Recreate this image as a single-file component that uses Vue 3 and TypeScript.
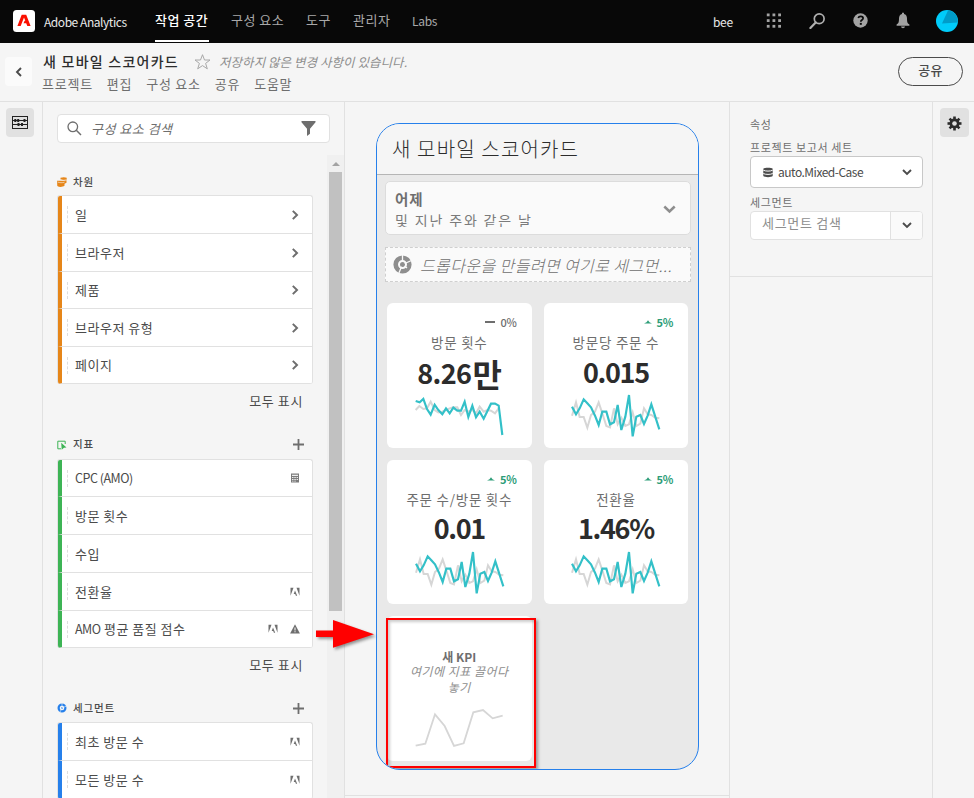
<script setup lang="ts">
type Badge = 'chevron' | 'calc' | 'adobe' | 'warn'
interface Item { name: string; badges: Badge[] }
interface Group { key: string; title: string; add: boolean; more: boolean; items: Item[] }
interface Kpi { label: string; value: string; unit?: string; delta: string; up: boolean; now: string; before: string }

const nav = [
  { label: '작업 공간', cls: 'n1' },
  { label: '구성 요소', cls: 'n2' },
  { label: '도구', cls: 'n3' },
  { label: '관리자', cls: 'n4' },
  { label: 'Labs', cls: 'n5' },
]
const menus = ['프로젝트', '편집', '구성 요소', '공유', '도움말']

const groups: Group[] = [
  {
    key: 'dim', title: '차원', add: false, more: true,
    items: ['일', '브라우저', '제품', '브라우저 유형', '페이지'].map((name) => ({ name, badges: ['chevron'] as Badge[] })),
  },
  {
    key: 'met', title: '지표', add: true, more: true,
    items: [
      { name: 'CPC (AMO)', badges: ['calc'] },
      { name: '방문 횟수', badges: [] },
      { name: '수입', badges: [] },
      { name: '전환율', badges: ['adobe'] },
      { name: 'AMO 평균 품질 점수', badges: ['adobe', 'warn'] },
    ],
  },
  {
    key: 'seg', title: '세그먼트', add: true, more: false,
    items: [
      { name: '최초 방문 수', badges: ['adobe'] },
      { name: '모든 방문 수', badges: ['adobe'] },
    ],
  },
]

// Latin runs are set tighter than Hangul runs.
const runs = (text: string) =>
  (text.match(/[A-Z()]+(?: \([A-Z]+\))?|[^A-Z()]+/g) ?? []).map((t) => ({ t, latin: /[A-Z]/.test(t) }))

const waveNow = '87,56 99,79 110,61 122,34 133,46 144,58 156,83 167,111 178,71 190,71 201,109 213,103 224,51 235,126 247,86 258,21 269,145 280,86 292,81 303,108 314,83 325,49 349,124'
const waveBefore = '87,83 99,43 110,87 122,87 133,119 144,81 156,71 167,43 178,76 190,114 201,118 213,61 224,109 235,89 247,114 258,109 269,73 280,114 292,107 303,61 314,79 325,81 336,89 349,91'

const kpis: Kpi[] = [
  {
    label: '방문 횟수', value: '8.26', unit: '만', delta: '0%', up: false,
    now: '86,39 98,43 109,33 120,63 131,80 143,50 154,66 166,79 177,61 188,76 199,59 211,68 222,68 233,41 244,87 256,53 267,88 278,71 290,92 312,47 324,47 335,53 346,141',
    before: '86,66 97,54 109,63 120,61 131,41 143,66 154,73 166,71 177,66 188,61 199,58 211,58 222,81 233,66 244,71 256,66 267,76 278,56 290,71 301,66 312,68 324,76 335,61',
  },
  { label: '방문당 주문 수', value: '0.015', delta: '5%', up: true, now: waveNow, before: waveBefore },
  { label: '주문 수/방문 횟수', value: '0.01', delta: '5%', up: true, now: waveNow, before: waveBefore },
  { label: '전환율', value: '1.46%', delta: '5%', up: true, now: waveNow, before: waveBefore },
]
</script>

<template>
  <div class="app">
    <header class="topbar">
      <svg class="logo" viewBox="0 0 22 22"><rect width="22" height="22" rx="3.5" fill="#fff" /><path d="M8.700 4.700h4.500l4.400 11.300h-3.300l-1.100-2.700h-2.700l1.100-2.500h.7l-1.300-3.200-3.300 8.400H4.400z" fill="#fa0f00" /></svg>
      <span class="product">Adobe Analytics</span>
      <nav class="nav">
        <a v-for="(n, i) in nav" :key="n.label" :class="[n.cls, { on: i === 0 }]">{{ n.label }}</a>
      </nav>
      <div class="tools">
        <span class="user">bee</span>
        <svg class="t-grid" width="16" height="16" viewBox="0 0 16 16" fill="#a3a3a3"><template v-for="r in 3" :key="r"><rect v-for="c in 3" :key="c" :x="(c - 1) * 5.7 + 1.8" :y="(r - 1) * 5.7 + 0.5" width="2.8" height="2.8" /></template></svg>
        <svg class="t-search" width="16" height="16" viewBox="0 0 16 16" fill="none" stroke="#b0b0b0"><circle cx="10.200" cy="5.800" r="4.900" stroke-width="1.700" /><path d="M6.700 9.400 1.400 15" stroke-width="2.200" stroke-linecap="round" /></svg>
        <svg class="t-help" width="15" height="15" viewBox="0 0 15 15"><circle cx="7.500" cy="7.500" r="7.200" fill="#a3a3a3" /><path d="M5.200 5.100c.4-1.200 1.300-1.700 2.500-1.700 1.400 0 2.400.7 2.400 1.900 0 1.800-2.300 1.700-2.300 3.400" fill="none" stroke="#080808" stroke-width="1.700" /><rect x="6.800" y="9.900" width="2" height="1.900" fill="#080808" /></svg>
        <svg class="t-bell" width="14" height="17" viewBox="0 0 14 17" fill="#a3a3a3"><path d="M6 .8h2v1.200c2 .5 3 2.200 3 4.500 0 4 .7 5 2.400 6v1.200H.6v-1.200C2.300 11.500 3 10.500 3 6.500 3 4.200 4 2.500 6 2zM5 14.600h4c-.2 1-1 1.700-2 1.700s-1.800-.7-2-1.700z" /></svg>
        <svg class="t-avatar" width="22" height="22" viewBox="0 0 22 22"><circle cx="11" cy="11" r="11" fill="#00ccfa" /><path d="M12 .6C18 1 22 6 21.800 12.400L6 13.600z" fill="#009cc9" /></svg>
      </div>
    </header>

    <div class="project">
      <button class="back"><svg width="8" height="10" viewBox="0 0 8 10" fill="none" stroke="#4b4b4b" stroke-width="1.900"><path d="M6 1 2 5l4 4" /></svg></button>
      <div class="titles">
        <div class="line1">
          <h1>새 모바일 스코어카드</h1>
          <svg class="star" width="17" height="16" viewBox="0 0 17 16"><path d="m8.500.700 2 5.300h5.500l-4.400 3.400 1.700 5.400-4.800-3.200-4.800 3.200 1.700-5.400L1 6h5.500z" fill="none" stroke="#a8a8a8" /></svg>
          <em>저장하지 않은 변경 사항이 있습니다.</em>
        </div>
        <div class="line2"><span v-for="m in menus" :key="m">{{ m }}</span></div>
      </div>
      <button class="share">공유</button>
    </div>

    <main class="body">
      <aside class="rail">
        <button class="railbtn"><svg width="16" height="13" viewBox="0 0 16 13"><path d="M.5 0v13M15.500 0v13M0 .500h16M0 12.500h16M0 4.500h16M0 8.500h16" fill="none" stroke="#222" stroke-width="1" /><path d="M2.300 3h2v3h-2zM5.200 3h2v3h-2zM11.500 3h2v3h-2zM5.500 7h2v3h-2zM9 7h2v3H9z" fill="#222" /></svg></button>
      </aside>

      <section class="left">
        <div class="search">
          <svg width="15" height="15" viewBox="0 0 15 15" fill="none" stroke="#6e6e6e"><circle cx="5.800" cy="5.800" r="4.800" stroke-width="1.300" /><path d="m9.300 9.300 4.700 4.700" stroke-width="1.500" /></svg>
          <em>구성 요소 검색</em>
          <svg width="15" height="15" viewBox="0 0 15 15" fill="#6e6e6e"><path d="M.5 0h14v1.200L9 7.800v5l-3 2.200V7.800L.5 1.200z" /></svg>
        </div>
        <div class="scroller">
          <div class="groups">
            <div v-for="g in groups" :key="g.key" class="group" :class="g.key">
              <div class="ghead">
                <svg v-if="g.key === 'dim'" width="10" height="10" viewBox="0 0 10 10"><path d="M3.500.800C5.500 0 8 0 9.700.700v2L8.500 3.500 3.500 2.500z" fill="#e68619" /><path d="M0 3.800h7.500l2-.6v2.600l-2 1v2C5.500 10.300 2 10.300.300 9z" fill="#e68619" /><path d="M3.500 2.700c2 .7 4 .7 6 0M.5 5c2 .9 5 .9 7 .2" stroke="#f5f5f5" stroke-width=".6" fill="none" /></svg>
                <svg v-else-if="g.key === 'met'" width="10" height="10" viewBox="0 0 10 10"><path d="M4 8.800H.8V1.200h7.400V4" fill="none" stroke="#3db455" /><path d="M4.200 2.800 9.500 7.500 7 7.700 4.700 9.800z" fill="#3db455" /></svg>
                <svg v-else width="10" height="10" viewBox="0 0 10 10"><circle cx="5" cy="5" r="3.400" fill="none" stroke="#2680eb" stroke-width="2.200" /><circle cx="5" cy="5" r="1" fill="#2680eb" /><path d="M5 5V0M5 5l4.500-2M5 5 2.500 10" stroke="#f5f5f5" stroke-width=".6" /></svg>
                <b>{{ g.title }}</b>
                <svg v-if="g.add" class="plus" width="11" height="11" viewBox="0 0 11 11"><path d="M5.500 0v11M0 5.500h11" stroke="#6e6e6e" stroke-width="1.800" /></svg>
              </div>
              <ul>
                <li v-for="it in g.items" :key="it.name">
                  <i class="grip"></i>
                  <span class="name"><span v-for="r in runs(it.name)" :key="r.t" :class="{ latin: r.latin }">{{ r.t }}</span></span>
                  <template v-for="b in it.badges" :key="b">
                    <svg v-if="b === 'chevron'" width="10" height="10" viewBox="0 0 10 10"><path d="m2.800.900 4.200 4.100-4.200 4.100" fill="none" stroke="#6e6e6e" stroke-width="2" /></svg>
                    <svg v-else-if="b === 'calc'" width="10" height="10" viewBox="0 0 10 10"><path d="M1 .500h8v9H1z" fill="#7c7c7c" /><path d="M2 1.700h6v1.300H2zM2 4h1.500v1H2zM4.300 4h1.500v1H4.300zM6.600 4H8v1H6.600zM2 6h1.500v1H2zM4.300 6h1.500v1H4.300zM6.600 6H8v1H6.600zM2 7.800h1.500v.8H2zM4.300 7.800h1.500v.8H4.300z" fill="#eee" /></svg>
                    <svg v-else-if="b === 'adobe'" width="10" height="10" viewBox="0 0 10 10"><path d="M.5.800h3L.5 8.800zM9.500.800h-3l3 8zM5 3.600l2.200 5.200H5.900L5.200 7H3.700z" fill="#6e6e6e" /></svg>
                    <svg v-else width="10" height="10" viewBox="0 0 10 10"><path d="M5 .300 9.900 9.500H.1z" fill="#6e6e6e" /><path d="M5 3.500v3M5 7.200v1.100" stroke="#fff" /></svg>
                  </template>
                </li>
              </ul>
              <a v-if="g.more" class="more">모두 표시</a>
            </div>
          </div>
          <div class="bar"><i class="scroll-up"></i><i class="thumb"></i></div>
        </div>
      </section>

      <section class="center">
        <div class="phone">
          <h2>새 모바일 스코어카드</h2>
          <div class="screen">
            <div class="range">
              <div><b>어제</b><p>및 지난 주와 같은 날</p></div>
              <svg width="13" height="9" viewBox="0 0 13 9"><path d="m1.300 1.500 5.200 5 5.200-5" fill="none" stroke="#8e8e8e" stroke-width="2.500" /></svg>
            </div>
            <div class="drop">
              <svg width="19" height="19" viewBox="0 0 19 19"><circle cx="9.500" cy="9.500" r="6.800" fill="none" stroke="#8e8e8e" stroke-width="4.600" /><circle cx="9.500" cy="9.500" r="2.500" fill="#8e8e8e" /><path d="M9.500 7V0M11.700 8.500 18.500 5.500M8.500 11.700 5.500 19M11.500 11l2.500 2" stroke="#fafafa" stroke-width="1.300" /></svg>
              <em>드롭다운을 만들려면 여기로 세그먼...</em>
            </div>
            <div class="grid">
              <article v-for="k in kpis" :key="k.label" class="kpi">
                <div class="delta" :class="{ rise: k.up }">
                  <svg v-if="k.up" width="8" height="4" viewBox="0 0 8 4"><path d="M0 3.500Q3 2.500 4 .200 5 2.500 8 3.500z" fill="#2d9d78" /></svg>
                  <svg v-else width="10" height="2" viewBox="0 0 10 2"><path d="M0 1h10" stroke="#6e6e6e" stroke-width="2" /></svg>
                  <span>{{ k.delta }}</span>
                </div>
                <div class="label">{{ k.label }}</div>
                <div class="value" :class="{ tight: !k.unit }">{{ k.value }}<span v-if="k.unit">{{ k.unit }}</span></div>
                <svg class="spark" viewBox="0 0 435 165" fill="none"><polyline :points="k.before" stroke="#d6d6d6" stroke-width="6" /><polyline :points="k.now" stroke="#33c0c8" stroke-width="6.500" /></svg>
              </article>
              <article class="kpi fresh">
                <b>새 KPI</b>
                <em>여기에 지표 끌어다<br />놓기</em>
                <svg class="spark" viewBox="0 0 435 165" fill="none"><polyline points="86,134 115,128 144,40 173,75 201,135 230,127 259,34 288,27 317,52 347,44" stroke="#d6d6d6" stroke-width="5.500" /></svg>
                <div class="mark"></div>
              </article>
            </div>
          </div>
        </div>
        <div class="foot"></div>
      </section>

      <section class="props">
        <div class="panel">
          <h3>속성</h3>
          <label>프로젝트 보고서 세트</label>
          <div class="select">
            <svg width="10" height="11" viewBox="0 0 10 11"><path d="M.3 1.700C1.500.3 8.500.3 9.700 1.700v7.300c-1.200 1.500-8.200 1.500-9.400 0z" fill="#4b4b4b" /><path d="M.3 3.200c2 1.200 7.400 1.200 9.400 0M.3 6.500c2 1.200 7.400 1.200 9.400 0" fill="none" stroke="#fff" /></svg>
            <span>auto.Mixed-Case</span>
            <svg width="10" height="7" viewBox="0 0 10 7"><path d="m1 1 4 4 4-4" fill="none" stroke="#4b4b4b" stroke-width="1.900" /></svg>
          </div>
          <label class="l2">세그먼트</label>
          <div class="combo">
            <span>세그먼트 검색</span>
            <button><svg width="10" height="7" viewBox="0 0 10 7"><path d="m1 1 4 4 4-4" fill="none" stroke="#4b4b4b" stroke-width="1.900" /></svg></button>
          </div>
        </div>
      </section>

      <aside class="rail right">
        <button class="railbtn"><svg width="15" height="15" viewBox="-7.500 -7.500 15 15"><g fill="#2c2c2c"><rect v-for="a in 4" :key="a" x="-1.300" y="-7" width="2.600" height="14" :transform="`rotate(${a * 45})`" /></g><circle r="3.700" fill="none" stroke="#2c2c2c" stroke-width="2.600" /><circle r="2.300" fill="#e1e1e1" /></svg></button>
      </aside>
    </main>

    <svg class="arrow" width="64" height="36" viewBox="0 0 64 36"><path d="M1 12.500h17V2l41 14.300L18 29.700V19H1z" fill="#f00" /></svg>
  </div>
</template>

<style>
body { margin: 0; overflow: hidden; }
</style>

<style scoped>
* { box-sizing: border-box; margin: 0; padding: 0; }
.app { width: 974px; height: 798px; overflow: hidden; position: relative; display: flex; flex-direction: column; background: #f5f5f5; color: #4b4b4b; font-family: "Noto Sans CJK KR", "Noto Sans", sans-serif; font-size: 13px; line-height: 16px; white-space: nowrap; }
svg { display: block; flex: none; }
button { font: inherit; color: inherit; border: 0; background: none; }

.topbar { height: 43px; flex: none; display: flex; align-items: center; background: #080808; padding-left: 13px; padding-right: 16px; }
.logo { width: 22px; height: 22px; margin-bottom: 2px; }
.product { margin-left: 9px; width: 111px; color: #e8e8e8; font-size: 12px; letter-spacing: -.45px; }
.nav { display: flex; align-self: stretch; }
.nav a { color: #a8a8a8; padding-top: 12px; letter-spacing: .5px; }
.nav a.on { color: #fff; border-bottom: 2px solid #fff; margin-bottom: 1px; font-weight: 500; }
.n1 { width: 54px; margin-right: 22px; }
.n2 { width: 75px; }
.n3 { width: 47px; }
.n4 { width: 59px; }
.nav .n5 { font-size: 12px; letter-spacing: -.3px; padding-top: 13px; }
.tools { margin-left: auto; display: flex; align-items: center; height: 100%; }
.tools svg { margin-bottom: 2px; }
.user { color: #e8e8e8; font-size: 12px; letter-spacing: -.3px; width: 52px; }
.t-search { margin-left: 28px; }
.t-help { margin-left: 28px; }
.t-bell { margin-left: 28px; }
.t-avatar { margin-left: 26px; }

.project { height: 59px; flex: none; display: flex; border-bottom: 1px solid #e1e1e1; padding: 14px 11px 0 5px; }
.back { width: 27px; height: 29px; border-radius: 4px; background: #fbfbfb; display: flex; align-items: center; justify-content: center; }
.titles { margin-left: 10px; margin-top: -5px; }
.line1 { display: flex; align-items: center; height: 20px; }
h1 { font-size: 14px; font-weight: 500; color: #2c2c2c; letter-spacing: 1.250px; width: 152px; padding-left: 1px; margin-top: -2px; }
.star { margin-bottom: 1px; }
.line1 em { color: #8e8e8e; font-size: 12.500px; margin-left: 8px; letter-spacing: .05px; }
.line2 { display: flex; gap: 14px; margin-top: 4px; color: #6e6e6e; letter-spacing: .75px; }
.share { margin-left: auto; width: 65px; height: 29px; border: 1px solid #4b4b4b; border-radius: 15px; font-weight: 500; letter-spacing: .4px; line-height: 24px; padding-bottom: 3px; }

.body { flex: 1; display: flex; min-height: 0; }
.rail { width: 43px; border-right: 1px solid #e1e1e1; padding: 6px 0 0 6px; }
.rail.right { width: 41px; border: 0; padding-left: 7px; }
.railbtn { width: 28px; height: 29px; border-radius: 4px; background: #e1e1e1; display: flex; align-items: center; justify-content: center; }
.right .railbtn { width: 29px; padding-top: 1px; }

.left { width: 302px; border-right: 1px solid #e1e1e1; display: flex; flex-direction: column; padding: 12px 0 0 14px; }
.search { width: 273px; height: 29px; flex: none; display: flex; align-items: center; background: #fff; border: 1px solid #e1e1e1; border-radius: 4px; padding: 0 13px 0 9px; }
.search em { flex: 1; margin-left: 9px; color: #6e6e6e; letter-spacing: .5px; }
.scroller { flex: 1; min-height: 0; display: flex; margin-top: 12px; }
.groups { width: 256px; padding-top: 17px; overflow: hidden; }
.bar { margin-left: 14px; width: 17px; background: #f0f0f0; padding: 7px 0 0 2px; }
.scroll-up { display: block; width: 0; border: 4px solid transparent; border-top: 0; border-bottom-color: #a3a3a3; margin-left: 3px; }
.thumb { display: block; margin-top: 6px; width: 13px; height: 439px; background: #c1c1c1; }
.ghead { display: flex; align-items: center; height: 23px; padding-right: 9px; }
.ghead svg:first-child { margin-bottom: 4px; }
.ghead b { font-size: 10.500px; font-weight: 500; margin-left: 6px; flex: 1; color: #4b4b4b; letter-spacing: .8px; margin-bottom: 3px; }
.ghead .plus { margin-bottom: 2px; }
.met .ghead { height: 27px; }
.seg .ghead { height: 26px; }
.met .ghead svg:first-child, .seg .ghead svg:first-child { margin-bottom: 2px; }
.seg .ghead b { margin-bottom: 2px; }
ul { list-style: none; border: 1px solid #e1e1e1; border-bottom: 0; border-radius: 3px; overflow: hidden; background: #fff; }
li { height: 38px; display: flex; align-items: center; gap: 12px; border-bottom: 1px solid #e1e1e1; border-left: 4px solid; padding-right: 12px; }
.dim li:nth-child(3), .met li:first-child, li:nth-child(5) { height: 37px; }
.dim li { border-left-color: #e68619; }
.met li { border-left-color: #3db455; }
.seg li { border-left-color: #2680eb; }
.name { flex: 1; margin-left: -10px; letter-spacing: .5px; color: #4b4b4b; white-space: pre; }
.latin { font-size: 12.500px; letter-spacing: -.5px; }
.grip { height: 17px; width: 6px; margin-left: 5px; border-left: 1px dashed #ddd; }
.more { display: block; text-align: right; padding: 9px 10px 0 0; height: 48px; letter-spacing: .6px; }

.center { width: 385px; border-right: 1px solid #e1e1e1; padding: 21px 0 0 31px; }
.phone { width: 323px; height: 647px; border: 1px solid #2680eb; border-radius: 24px; overflow: hidden; background: #e9e9e9; }
h2 { height: 51px; background: #f5f5f5; font-size: 20px; font-weight: 300; line-height: 49px; padding-left: 15px; color: #2c2c2c; letter-spacing: 1.150px; border-bottom: 1px solid #b5b5b5; }
.screen { padding: 6px 8px 0; }
.range { width: 306px; height: 54px; display: flex; justify-content: space-between; align-items: flex-start; background: #fafafa; border: 1px solid #dcdcdc; border-radius: 5px; padding: 0 14px 0 9px; color: #6e6e6e; }
.range svg { margin-top: 23px; }
.range b { display: block; font-size: 14.500px; line-height: 20px; padding-top: 7px; letter-spacing: .8px; }
.range p { font-size: 14px; height: 17px; line-height: 21px; overflow: hidden; color: #7b7b7b; letter-spacing: 1.850px; margin-top: 1px; }
.drop { margin-top: 12px; width: 306px; height: 35px; display: flex; align-items: center; background: #fafafa; border: 1px dashed #cfcfcf; padding-left: 7px; }
.drop em { margin-left: 8px; font-size: 16px; font-weight: 300; color: #6e6e6e; letter-spacing: .4px; }
.grid { display: grid; grid-template-columns: 144.600px 144.600px; grid-auto-rows: 144.600px; gap: 12px; margin: 21px 0 0 2px; }
.kpi { background: #fff; border-radius: 6px; display: flex; flex-direction: column; align-items: center; position: relative; }
.delta { align-self: flex-end; display: flex; align-items: center; gap: 5px; margin: 12px 15px 0 0; height: 14px; font-size: 11px; font-weight: 500; color: #6e6e6e; letter-spacing: -.2px; }
.delta.rise { color: #2d9d78; font-weight: 700; }
.label { margin-top: 5px; font-size: 13.500px; color: #6e6e6e; line-height: 16px; letter-spacing: .75px; }
.value { display: flex; align-items: center; height: 38px; padding-top: 7px; font-size: 27px; font-weight: 700; color: #2c2c2c; letter-spacing: -.6px; }
.value.tight { letter-spacing: -1.350px; padding-top: 5px; }
.value span { font-size: 32px; margin-left: 1px; }
.spark { width: 145px; height: 55px; }
.fresh b { margin-top: 33px; font-size: 12px; color: #6e6e6e; line-height: 16px; }
.fresh em { font-size: 12px; text-align: center; color: #8e8e8e; line-height: 16px; height: 36px; letter-spacing: .5px; margin-top: -2px; margin-bottom: 2px; }
.mark { position: absolute; left: -1px; top: 1.500px; width: 150px; height: 150px; border: 2px solid #f00; box-shadow: 2px 2px 3px rgba(0, 0, 0, .35), inset 2px 2px 3px rgba(0, 0, 0, .2); }
.foot { margin: 25px 0 0 -31px; border-top: 1px solid #e1e1e1; }

.props { width: 203px; border-right: 1px solid #e1e1e1; }
.panel { height: 175px; width: 202px; border-bottom: 1px solid #e1e1e1; padding: 14px 0 0 20px; color: #6e6e6e; }
h3, label { display: block; font-size: 11px; font-weight: 400; letter-spacing: .6px; }
label { margin-top: 7px; height: 17px; }
.select { width: 173px; height: 32px; border: 1px solid #c8c8c8; border-radius: 4px; background: #fff; display: flex; align-items: center; padding: 0 10px 0 12px; color: #4b4b4b; font-size: 12px; letter-spacing: -.5px; }
.select span { flex: 1; margin-left: 5px; }
.l2 { margin-top: 6px; }
.combo { width: 173px; height: 29px; border: 1px solid #e1e1e1; border-radius: 4px; background: #fff; display: flex; overflow: hidden; color: #8e8e8e; }
.combo span { flex: 1; padding: 3px 0 0 11px; letter-spacing: .7px; }
.combo button { width: 32px; background: #fafafa; border-left: 1px solid #e1e1e1; display: flex; align-items: center; justify-content: center; }

.arrow { position: absolute; left: 315px; top: 618px; filter: drop-shadow(2px 2px 1.500px rgba(0, 0, 0, .4)); }
</style>
